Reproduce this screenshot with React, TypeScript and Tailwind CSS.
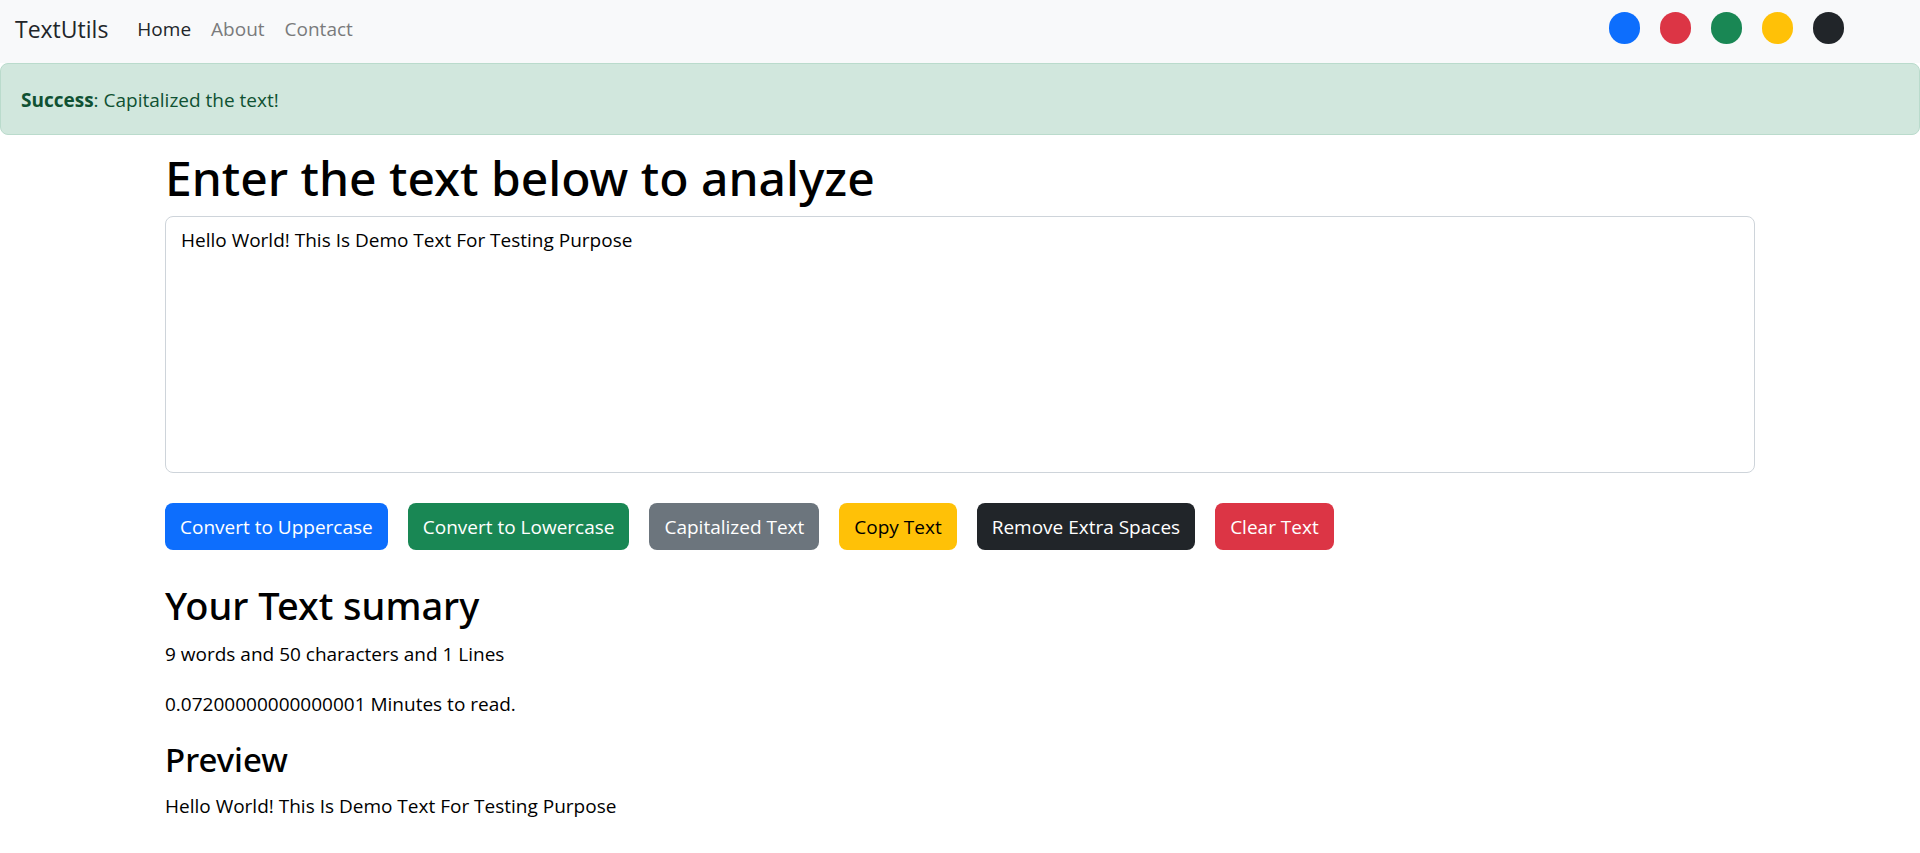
import { useState } from "react";

const themes = [
  { name: "Blue", className: "bg-[#0d6efd]" },
  { name: "Red", className: "bg-[#dc3545]" },
  { name: "Green", className: "bg-[#198754]" },
  { name: "Yellow", className: "bg-[#ffc107]" },
  { name: "Dark", className: "bg-[#212529]" },
];

const initialText = "Hello World! This Is Demo Text For Testing Purpose";

function Navbar() {
  return (
    <nav className="flex h-[63px] items-center bg-[#f8f9fa] pr-[76px] pb-[6px] pl-[15px]">
      <a href="#" className="mr-[29px] text-[23px] text-[#212529]">
        TextUtils
      </a>
      <ul className="flex flex-1 gap-5 text-[#7a7b7c]">
        <li><a href="#" className="text-[#212529]">Home</a></li>
        <li><a href="#about">About</a></li>
        <li><a href="#contact">Contact</a></li>
      </ul>
      <div className="flex gap-5 pb-[2px]">
        {themes.map((t) => (
          <button key={t.name} type="button" aria-label={t.name} className={"h-8 w-[31px] rounded-full " + t.className} />
        ))}
      </div>
    </nav>
  );
}

const buttonBase = "h-[47px] rounded-lg px-[15px] ";
const headingBase = "font-['Noto_Sans','Open_Sans',sans-serif] font-medium ";

export default function App() {
  const [text, setText] = useState(initialText);
  const words = text.split(/\s+/).filter(Boolean).length;
  const capitalize = () =>
    setText(text.toLowerCase().replace(/(^|\s)\S/g, (c) => c.toUpperCase()));

  return (
    <div className="font-['Open_Sans','Noto_Sans',sans-serif] text-[19px] leading-[30px] text-[#212529]">
      <Navbar />
      <div role="alert" className="h-[72px] rounded-lg border border-[#badbcc] bg-[#d1e7dd] px-5 py-[21px] text-[#0f5132]">
        <strong>Success</strong>: Capitalized the text!
      </div>
      <main className="mx-auto max-w-[1650px] px-[30px] pt-[13px] text-black">
        <h1 className={headingBase + "mb-2 text-5xl leading-[60px]"}>
          <label htmlFor="source">Enter the text below to analyze</label>
        </h1>
        <textarea
          id="source"
          rows={8}
          value={text}
          onChange={(e) => setText(e.target.value)}
          className="block w-full resize-none rounded-lg border border-[#ced4da] bg-white px-[15px] pt-2 pb-[7px] outline-none"
        />
        <div className="mt-[30px] flex flex-wrap gap-5 text-white">
          <button type="button" onClick={() => setText(text.toUpperCase())} className={buttonBase + "bg-[#0d6efd]"}>Convert to Uppercase</button>
          <button type="button" onClick={() => setText(text.toLowerCase())} className={buttonBase + "bg-[#198754]"}>Convert to Lowercase</button>
          <button type="button" onClick={capitalize} className={buttonBase + "bg-[#6c757d]"}>Capitalized Text</button>
          <button type="button" onClick={() => navigator.clipboard.writeText(text)} className={buttonBase + "bg-[#ffc107] text-black"}>Copy Text</button>
          <button type="button" onClick={() => setText(text.split(/\s+/).join(" "))} className={buttonBase + "bg-[#212529]"}>Remove Extra Spaces</button>
          <button type="button" onClick={() => setText("")} className={buttonBase + "bg-[#dc3545]"}>Clear Text</button>
        </div>
        <h2 className={headingBase + "mt-[31px] mb-[10px] text-[38px] leading-[48px]"}>Your Text sumary</h2>
        <p className="mb-5">{words} words and {text.length} characters and {text.split("\n").length} Lines</p>
        <p className="mb-5">{0.008 * words} Minutes to read.</p>
        <h3 className={headingBase + "mb-[10px] text-[33px] leading-[42px]"}>Preview</h3>
        <p>{text}</p>
      </main>
    </div>
  );
}
